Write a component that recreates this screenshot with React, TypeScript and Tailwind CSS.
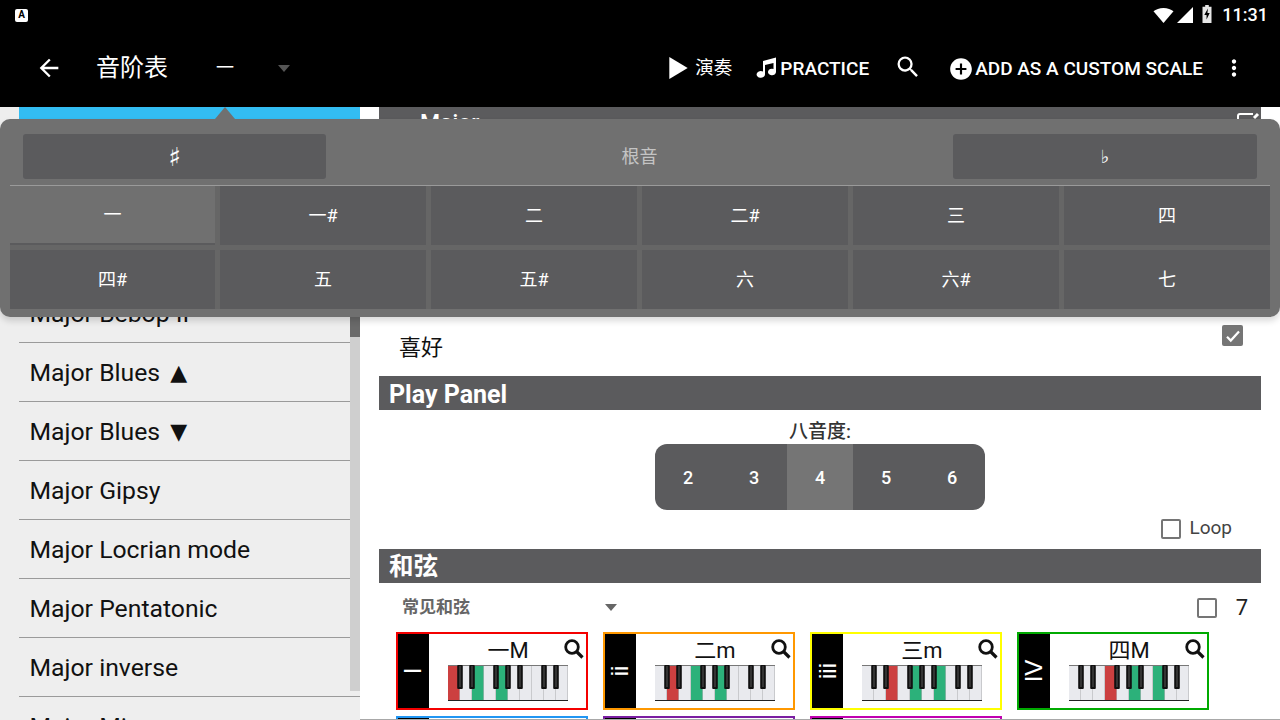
import { Fragment } from 'react';

const rows = [
  { name: 'Major' },
  { name: 'Major Arpeggio' },
  { name: 'Major Bebop' },
  { name: 'Major Bebop II' },
  { name: 'Major Blues', mark: '▲' },
  { name: 'Major Blues', mark: '▼' },
  { name: 'Major Gipsy' },
  { name: 'Major Locrian mode' },
  { name: 'Major Pentatonic' },
  { name: 'Major inverse' },
  { name: 'Major Minor' },
];
const notes = ['一', '一#', '二', '二#', '三', '四', '四#', '五', '五#', '六', '六#', '七'];
const octaves = ['2', '3', '4', '5', '6'];
const blackKeys = [1, 2, 4, 5, 6, 8, 9];

const chords = [
  { num: 'I', name: '一M', border: 'border-[#f40000]', root: 0 },
  { num: 'ii', name: '二m', border: 'border-[#ff9800]', root: 1 },
  { num: 'iii', name: '三m', border: 'border-[#ffff00]', root: 2 },
  { num: 'IV', name: '四M', border: 'border-[#00aa00]', root: 3 },
];
const nextChords = ['border-[#2196f3]', 'border-[#7b1fa2]', 'border-[#c000b0]'];

function Icon({ d, className }: { d: string; className: string }) {
  return (
    <svg viewBox="0 0 24 24" fill="currentColor" className={className}>
      <path d={d} />
    </svg>
  );
}

const searchPath = 'M15.5 14h-.79l-.28-.27A6.471 6.471 0 0 0 16 9.5 6.5 6.5 0 1 0 9.5 16c1.61 0 3.09-.59 4.23-1.57l.27.28v.79l5 4.99L20.49 19l-4.99-5zm-6 0C7.01 14 5 11.99 5 9.5S7.01 5 9.5 5 14 7.01 14 9.5 11.99 14 9.5 14z';

function Piano({ root }: { root: number }) {
  return (
    <svg width="120" height="36" viewBox="0 0 120 36" className="block">
      <rect width="120" height="36" fill="#b5b5b8" />
      <rect width="120" height="1" fill="#777" />
      {Array.from({ length: 10 }).map((_, i) => {
        let fill = '#e9eaee';
        if (i === root) fill = '#cc4040';
        if (i === root + 2 || i === root + 4) fill = '#2cb17a';
        return <rect key={i} x={i * 12} y="1" width="11.4" height="34" fill={fill} />;
      })}
      <rect y="35" width="120" height="1" fill="#222" />
      {blackKeys.map((k) => (
        <Fragment key={k}>
          <rect x={k * 12 - 2.8} y="0" width="5.6" height="24" rx="1" fill="#111" />
          <rect x={k * 12 - 1} y="1" width="2" height="21" fill="#333" />
        </Fragment>
      ))}
    </svg>
  );
}

function ChordCard({ num, name, border, root }: { num: string; name: string; border: string; root: number }) {
  return (
    <div className={`relative flex h-[78px] w-[192px] border-2 ${border}`}>
      <div className="flex w-[31px] shrink-0 items-center justify-center bg-black">
        <span className="-rotate-90 font-['Liberation_Sans',sans-serif] text-[24px] leading-none text-white">{num}</span>
      </div>
      <div className="flex flex-1 flex-col items-center pl-[19px] pr-[18px]">
        <div className="mt-[2px] h-[29px] text-[22px] leading-[29px] text-[#111]">{name}</div>
        <Piano root={root} />
      </div>
      <svg viewBox="0 0 20 20" fill="none" stroke="#111" className="absolute right-[2px] top-[5px] h-[20px] w-[20px]">
        <circle cx="8" cy="8" r="6.300" strokeWidth="2.800" />
        <path d="M12.500 12.500 18.500 18.500" strokeWidth="3.200" />
      </svg>
    </div>
  );
}

function Popup() {
  return (
    <div className="absolute left-0 top-[119px] h-[198px] w-[1280px] rounded-[10px] bg-[#707070] shadow-[0_4px_6px_rgba(0,0,0,0.15)]">
      <div className="absolute left-[215px] top-[-12px] h-0 w-0 border-x-[10px] border-b-[12px] border-x-transparent border-b-[#707070]" />
      <div className="flex h-[66px] items-start justify-between pl-[23px] pr-[23px] pt-[15px]">
        <div className="flex h-[45px] w-[303px] items-center justify-center rounded-[3px] bg-[#5b5b5d] font-['DejaVu_Sans',sans-serif] text-[26px] leading-none text-white">♯</div>
        <div className="mt-[8px] text-[18px] leading-[30px] text-[#c4c4c4]">根音</div>
        <div className="flex h-[45px] w-[304px] items-center justify-center rounded-[3px] bg-[#5b5b5d] font-['DejaVu_Sans',sans-serif] text-[18px] leading-none text-white">♭</div>
      </div>
      <div className="mx-[10px] grid grid-cols-[205px_206px_206px_206px_206px_206px] gap-[5px] border-t border-[#9a9a9a] bg-[#666666]">
        {notes.map((n, i) => (
          <div
            key={n}
            className={`flex h-[59px] items-center justify-center text-[18px] text-white ${i === 0 ? 'border-b-2 border-[#5b5b5d] bg-[#707070]' : 'bg-[#5b5b5d]'}`}
          >
            {n}
          </div>
        ))}
      </div>
    </div>
  );
}

export default function App() {
  return (
    <div className="relative flex h-[720px] w-[1280px] flex-col overflow-hidden bg-white font-['Roboto','Noto_Sans_CJK_SC',sans-serif]">
      {/* status bar */}
      <div className="flex h-[24px] items-center justify-between bg-black pl-[15px] pr-[12px] pt-[6px] text-white">
        <div className="flex h-[13px] w-[13px] items-center justify-center rounded-[2px] bg-white text-[10px] font-bold leading-none text-black">A</div>
        <div className="flex items-center">
          <svg viewBox="0 0 24 18" className="h-[15px] w-[21px]" fill="currentColor"><path d="M12 18 0 4C3 1.500 7 0 12 0s9 1.500 12 4z" /></svg>
          <svg viewBox="0 0 16 16" className="ml-[3px] h-[16px] w-[16px]" fill="currentColor"><path d="M0 16 16 0v16z" /></svg>
          <svg viewBox="0 0 10 20" className="ml-[9px] h-[18px] w-[10px] -translate-y-px" fill="#e6e6e6"><path fillRule="evenodd" d="M3 0h4v2h3v18H0V2h3zM6 4 2 11h2.500v5L8 9H5.500z" /></svg>
          <span className="ml-[10px] text-[18px] font-medium leading-none">11:31</span>
        </div>
      </div>

      {/* toolbar */}
      <div className="flex h-[83px] items-center bg-black pt-[5px] text-white">
        <Icon d="M20 11H7.830l5.590-5.590L12 4l-8 8 8 8 1.410-1.410L7.830 13H20v-2z" className="ml-[35px] h-[28px] w-[28px]" />
        <div className="ml-[33px] text-[24px] leading-none">音阶表</div>
        <div className="ml-[48px] text-[18px] leading-none">一</div>
        <div className="ml-[44px] h-0 w-0 border-x-[6px] border-t-[7px] border-x-transparent border-t-[#555]" />
        <div className="ml-auto flex items-center">
          <svg viewBox="0 0 20 24" className="h-[22px] w-[19px]" fill="currentColor"><path d="M0 0 20 12 0 24z" /></svg>
          <span className="ml-[7px] text-[18.500px] leading-none">演奏</span>
          <svg viewBox="0 0 24 24" className="ml-[23px] h-[24px] w-[24px]" fill="currentColor"><path d="M8 5 21 1.500V16a4 3.200 0 1 1-2.500-3V7L10 9v9.500a4.200 3.400 0 1 1-2-3z" /></svg>
          <span className="ml-[1px] text-[19px] font-medium leading-none">PRACTICE</span>
          <Icon d={searchPath} className="ml-[25px] h-[28px] w-[28px] -translate-y-px" />
          <Icon d="M12 2C6.480 2 2 6.480 2 12s4.480 10 10 10 10-4.480 10-10S17.520 2 12 2zm5 11h-4v4h-2v-4H7v-2h4V7h2v4h4v2z" className="ml-[26px] h-[26px] w-[26px] translate-y-px" />
          <span className="ml-[1px] text-[19px] font-medium leading-none">ADD AS A CUSTOM SCALE</span>
          <Icon d="M12 8c1.100 0 2-.9 2-2s-.9-2-2-2-2 .9-2 2 .9 2 2 2zm0 2c-1.100 0-2 .9-2 2s.9 2 2 2 2-.9 2-2-.9-2-2-2zm0 6c-1.100 0-2 .9-2 2s.9 2 2 2 2-.9 2-2-.9-2-2-2z" className="ml-[18px] mr-[33px] h-[26px] w-[26px]" />
        </div>
      </div>

      <div className="flex min-h-0 flex-1">
        {/* scale list */}
        <div className="relative h-full w-[360px] shrink-0 overflow-hidden bg-[#eeeeee] pl-[19px]">
          {rows.map((r, i) => (
            <Fragment key={r.name + (r.mark ?? '')}>
              <div className={`flex h-[58px] items-center pl-[10.500px] pt-[2px] text-[24.750px] text-[#111] ${i === 0 ? 'bg-[#33bdf2]' : ''}`}>
                {r.name}
                {r.mark && <span className="ml-[10px] font-['DejaVu_Sans',sans-serif] text-[22px] leading-none">{r.mark}</span>}
              </div>
              <div className="h-px bg-[#9a9a9a]" />
            </Fragment>
          ))}
          <div className="absolute right-0 top-[230px] h-[354px] w-[10px] bg-[#cfcfcf]" />
          <div className="absolute right-0 top-[210px] h-[20px] w-[10px] bg-[#6a6a6a]" />
        </div>

        {/* scale detail */}
        <div className="min-w-0 flex-1 pl-[19px] pr-[19px] shadow-[-1px_0_2px_rgba(0,0,0,0.2)]">
          <div className="relative flex h-[34px] items-center bg-[#5b5b5d] pl-[41px] text-[23px] font-medium text-white">
            Major
            <svg viewBox="0 0 24 24" className="absolute right-[1px] top-0 h-[24px] w-[24px]" fill="none" stroke="white" strokeWidth="2"><path d="M2 20V9a2 2 0 0 1 2-2h13" /><path d="m18 11 4-4" strokeWidth="3" /></svg>
          </div>
          <div className="flex h-[235px] items-end justify-between pl-[20px] pr-[18px]">
            <div className="text-[22px] leading-[56px] text-[#111]">喜好</div>
            <div className="mb-[30px] flex h-[21px] w-[21px] items-center justify-center rounded-[2px] bg-[#757575]">
              <svg viewBox="0 0 24 24" className="h-[18px] w-[18px]" fill="none" stroke="white" strokeWidth="3"><path d="m4 13 5 5L20 6" /></svg>
            </div>
          </div>

          <div className="flex h-[34px] items-center bg-[#5b5b5d] pl-[10px] pt-[2px] text-[25px] font-bold leading-none text-white">Play Panel</div>
          <div className="mt-[11px] text-center text-[19px] font-medium leading-[22px] text-[#333]">八音度:</div>
          <div className="mx-auto mt-[1px] flex h-[66px] w-[330px] overflow-hidden rounded-[12px] bg-[#5b5b5d]">
            {octaves.map((o) => (
              <div key={o} className={`flex flex-1 items-center justify-center text-[18px] font-medium text-white ${o === '4' ? 'bg-[#757575]' : ''}`}>{o}</div>
            ))}
          </div>
          <div className="flex h-[39px] items-end justify-end pb-[10px] pr-[29px]">
            <div className="h-[20px] w-[20px] rounded-[2px] border-2 border-[#757575]" />
            <span className="ml-[8px] text-[19px] leading-[22px] text-[#444]">Loop</span>
          </div>

          <div className="flex h-[34px] items-center bg-[#5b5b5d] pl-[10px] pt-[3px] text-[24.500px] font-bold leading-none text-white">和弦</div>
          <div className="flex h-[49px] items-center pl-[23px] pr-[13px]">
            <span className="text-[17px] font-bold text-[#666]">常见和弦</span>
            <div className="ml-[135px] h-0 w-0 border-x-[6px] border-t-[7px] border-x-transparent border-t-[#666]" />
            <div className="ml-auto h-[20px] w-[20px] rounded-[2px] border-2 border-[#757575]" />
            <span className="ml-[19px] text-[22px] text-[#222]">7</span>
          </div>
          <div className="flex gap-[15px] pl-[17px]">
            {chords.map((c) => <ChordCard key={c.num} {...c} />)}
          </div>
          <div className="mt-[6px] flex gap-[15px] pl-[17px]">
            {nextChords.map((b) => (
              <div key={b} className={`h-[78px] w-[192px] border-2 ${b}`}>
                <div className="h-full w-[31px] bg-black" />
              </div>
            ))}
          </div>
        </div>
      </div>

      <Popup />
      <div className="absolute bottom-0 left-[360px] right-0 h-px bg-[#a8a8a8]" />
    </div>
  );
}
